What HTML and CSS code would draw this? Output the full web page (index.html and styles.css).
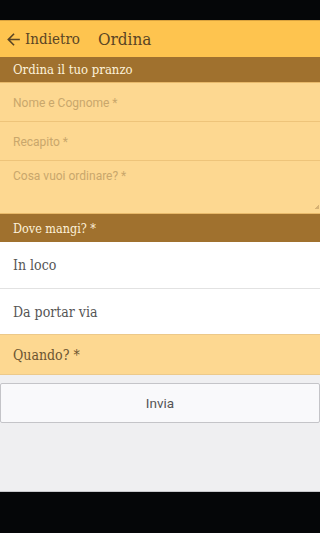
FILE: index.html
```html
<!DOCTYPE html>
<html lang="it">
<head>
<meta charset="utf-8">
<link rel="stylesheet" href="styles.css">
</head>
<body>
<div class="screen">
  <div class="statusbar"></div>
  <header class="topbar">
    <a class="back">
      <svg class="back-icon" viewBox="0 0 24 24" width="19" height="19"><path d="M20 11H7.83l5.59-5.59L12 4l-8 8 8 8 1.41-1.41L7.83 13H20v-2z" fill="#5a4524"/></svg>
      <span>Indietro</span>
    </a>
    <span class="title">Ordina</span>
  </header>
  <div class="section">Ordina il tuo pranzo</div>
  <div class="field"><span class="ph">Nome e Cognome *</span></div>
  <div class="field"><span class="ph">Recapito *</span></div>
  <div class="field area"><span class="ph">Cosa vuoi ordinare? *</span><span class="grip"></span></div>
  <div class="section section-b">Dove mangi? *</div>
  <div class="option">In loco</div>
  <div class="option">Da portar via</div>
  <div class="when">Quando? *</div>
  <div class="content">
    <button class="btn">Invia</button>
  </div>
  <div class="navbar"></div>
</div>
</body>
</html>
```
FILE: styles.css
```css
html, body { margin: 0; padding: 0; }
body { width: 100%; height: 533px; overflow: hidden; background: #050608; }
.screen { display: flex; flex-direction: column; height: 533px; width: 100%; }
.statusbar { height: 20px; background: #050608; flex: none; }
.topbar, .section, .option, .when {
  font-family: "DejaVu Serif Condensed", "DejaVu Serif", serif;
  font-stretch: semi-condensed;
}
.topbar {
  height: 37px; flex: none; background: #FEC44F; box-sizing: border-box;
  border-top: 1px solid #d9a23e;
  display: flex; align-items: center; padding-left: 4px;
  color: #5a4524;
}
.back { display: flex; align-items: center; gap: 2px; font-size: 15px; }
.back-icon { display: block; }
.title { font-size: 17px; margin-left: 18px; }
.section {
  height: 26px; flex: none; background: #A0712E; color: #FDF1DA;
  font-size: 13px;
  display: flex; align-items: center; padding-left: 13px;
  box-sizing: border-box; border-bottom: 1px solid #e8b96a;
}
.section-b { height: 29px; font-size: 12.5px; border-top: 1px solid #e8b96a; border-bottom: none; }
.field {
  height: 39px; flex: none; background: #FDD891; box-sizing: border-box;
  border-bottom: 1px solid #EEC47A; padding: 13px 13px 0;
  font-family: Roboto, sans-serif; font-size: 12px; color: #C9A76C;
  position: relative;
}
.field.area { height: 52px; padding-top: 8px; border-bottom: none; }
.grip {
  position: absolute; right: 1px; bottom: 4px; width: 4px; height: 4px;
  background: linear-gradient(135deg, transparent 50%, #d6b173 50%);
}
.option {
  height: 47px; flex: none; background: #fff; box-sizing: border-box;
  border-bottom: 1px solid #e2e2e2; display: flex; align-items: center;
  padding-left: 13px; font-size: 14px; color: #555;
}
.option + .option { height: 46px; border-bottom: 1px solid #ecc98a; }
.when {
  height: 40px; flex: none; background: #FDD891; box-sizing: border-box;
  display: flex; align-items: center; padding-left: 13px;
  font-size: 14px; color: #6b5430;
  border-bottom: 1px solid #ecc98a;
}
.content { flex: 1; background: #EFEFF1; padding-top: 8px; border-bottom: 1px solid #c8c8cc; }
.btn {
  display: block; width: 100%; height: 40px; margin: 0; box-sizing: border-box;
  background: #F9F9FB; border: 1px solid #C4C4C8; border-radius: 2px;
  font-family: Roboto, sans-serif; font-size: 13.5px; color: #555;
}
.navbar { height: 41px; flex: none; background: #050608; }
```
